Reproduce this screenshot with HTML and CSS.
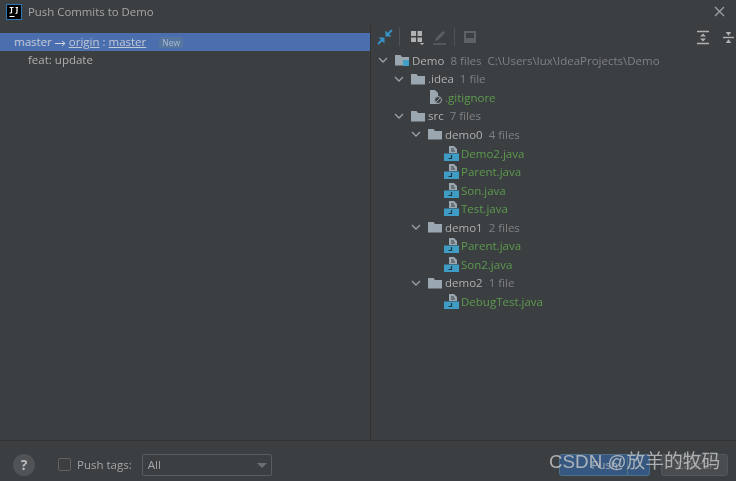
FILE: index.html
```html
<!DOCTYPE html>
<html lang="en">
<head>
<meta charset="utf-8">
<title>Push Commits to Demo</title>
<link rel="stylesheet" href="styles.css">
</head>
<body>
<svg class="defs" width="0" height="0">
  <defs>
    <symbol id="folder" viewBox="0 0 14 12"><path d="M0 1h5.500l1.500 2h7v8.500H0z" fill="#9aa7b0"/></symbol>
    <symbol id="java" viewBox="0 0 15 15">
      <path d="M5 0h5l3 3v4H5z" fill="#9aa7b0"/>
      <path d="M7 3h3M7 5h4" stroke="#3c3f41" stroke-width="1"/>
      <path d="M0 7.500h15V15H0z" fill="#3f9cc4"/>
      <path d="M7.500 9v3.500H4.500" fill="none" stroke="#20343c" stroke-width="1.200"/>
    </symbol>
    <symbol id="chev" viewBox="0 0 10 6"><path d="M1 1l4 4 4-4" fill="none" stroke="#9da0a2" stroke-width="1.300"/></symbol>
  </defs>
</svg>
<div class="dialog">
  <header class="titlebar">
    <svg class="app-icon" width="16" height="16" viewBox="0 0 16 16"><rect width="16" height="16" fill="#2a78b8"/><rect x="1" y="1" width="14" height="14" fill="#000"/><path d="M3.500 3.500h4M5.500 3.500v5.500M3.500 9h2M9.500 3.500h2.500M11 3.500v5c0 .8-.6 1-1.500 1M3.500 12.500h5" stroke="#fff" stroke-width="1.200" fill="none"/></svg>
    <span class="title">Push Commits to Demo</span>
    <svg class="close" width="11" height="11" viewBox="0 0 11 11"><path d="M1 1l9 9M10 1l-9 9" stroke="#9b9ea0" stroke-width="1.400"/></svg>
  </header>
  <main class="panes">
    <section class="commits">
      <div class="branch">master <svg class="arrow" width="11" height="7" viewBox="0 0 11 7"><path d="M0 3.500h10M7 1l3 2.500L7 6" fill="none" stroke="#d0d5de"/></svg> <u>origin</u> : <u>master</u><span class="new">New</span></div>
      <div class="commit">feat: update</div>
    </section>
    <section class="changes">
      <div class="toolbar">
        <svg width="16" height="16" viewBox="0 0 16 16"><path d="M15 1l-4.500 4.500" stroke="#3592c4" stroke-width="2"/><path d="M8.500 1.500l6 6h-6z" fill="#3592c4"/><path d="M1 15l4.500-4.500" stroke="#3592c4" stroke-width="2"/><path d="M7.500 14.500l-6-6h6z" fill="#3592c4"/></svg>
        <span class="tsep first"></span>
        <svg width="16" height="16" viewBox="0 0 16 16"><path d="M1 2h5v5H1zM7.500 2H12v5H7.500zM1 8.500h5V13H1zM7.500 8.500H12V13H7.500z" fill="#afb1b3"/><path d="M9.500 14h5L12 16z" fill="#afb1b3"/></svg>
        <svg width="16" height="16" viewBox="0 0 16 16"><path d="M2 15h13" stroke="#5c5f61" stroke-width="1.600"/><path d="M4 12l1-3 7-7 2 2-7 7z" fill="#5c5f61"/></svg>
        <span class="tsep"></span>
        <svg width="12" height="14" viewBox="0 0 12 14"><path d="M0 1h12v12H0z" fill="#5f6264"/><path d="M2 3h8v5H2z" fill="#3c3f41"/></svg>
        <span class="tspacer"></span>
        <svg width="14" height="15" viewBox="0 0 14 15"><path d="M1 1.500h12M1 13.500h12" stroke="#afb1b3" stroke-width="1.500"/><path d="M7 3.500l3 3H4zM7 11.500l-3-3h6z" fill="#afb1b3"/></svg>
        <svg class="last" width="13" height="15" viewBox="0 0 14 15"><path d="M1 7.500h12" stroke="#afb1b3" stroke-width="1.500"/><path d="M4 1.500h6l-3 4zM4 13.500h6l-3-4z" fill="#afb1b3"/></svg>
      </div>
      <ul class="tree">
        <li class="row d0"><svg class="chevron"><use href="#chev"/></svg>
          <span class="module"><svg class="ficon"><use href="#folder"/></svg><i class="dot"></i></span><span class="name">Demo</span><span class="meta">8 files</span><span class="meta">C:\Users\lux\IdeaProjects\Demo</span></li>
        <li class="row d1"><svg class="chevron"><use href="#chev"/></svg><svg class="ficon"><use href="#folder"/></svg><span class="name">.idea</span><span class="meta">1 file</span></li>
        <li class="row d2"><svg class="gicon" viewBox="0 0 14 14"><path d="M1 0h5l3 3v11H1z" fill="#9aa7b0"/><circle cx="9" cy="10" r="3.500" fill="#3c3f41" stroke="#9aa7b0"/><path d="M7 12l4-4" stroke="#9aa7b0"/></svg><span class="file">.gitignore</span></li>
        <li class="row d1"><svg class="chevron"><use href="#chev"/></svg><svg class="ficon"><use href="#folder"/></svg><span class="name">src</span><span class="meta">7 files</span></li>
        <li class="row d2f"><svg class="chevron"><use href="#chev"/></svg><svg class="ficon"><use href="#folder"/></svg><span class="name">demo0</span><span class="meta">4 files</span></li>
        <li class="row d3"><svg class="jicon"><use href="#java"/></svg><span class="file">Demo2.java</span></li>
        <li class="row d3"><svg class="jicon"><use href="#java"/></svg><span class="file">Parent.java</span></li>
        <li class="row d3"><svg class="jicon"><use href="#java"/></svg><span class="file">Son.java</span></li>
        <li class="row d3"><svg class="jicon"><use href="#java"/></svg><span class="file">Test.java</span></li>
        <li class="row d2f"><svg class="chevron"><use href="#chev"/></svg><svg class="ficon"><use href="#folder"/></svg><span class="name">demo1</span><span class="meta">2 files</span></li>
        <li class="row d3"><svg class="jicon"><use href="#java"/></svg><span class="file">Parent.java</span></li>
        <li class="row d3"><svg class="jicon"><use href="#java"/></svg><span class="file">Son2.java</span></li>
        <li class="row d2f"><svg class="chevron"><use href="#chev"/></svg><svg class="ficon"><use href="#folder"/></svg><span class="name">demo2</span><span class="meta">1 file</span></li>
        <li class="row d3"><svg class="jicon"><use href="#java"/></svg><span class="file">DebugTest.java</span></li>
      </ul>
    </section>
  </main>
  <footer class="footer">
    <span class="help">?</span>
    <span class="check"></span>
    <span class="label">Push tags:</span>
    <span class="select">All<i class="caret"></i></span>
    <span class="fspacer"></span>
    <span class="btn primary">Push<i class="split"></i></span>
    <span class="btn">Cancel</span>
  </footer>
  <div class="watermark">CSDN @放羊的牧码</div>
</div>
</body>
</html>
```

FILE: styles.css
```css
* { box-sizing: border-box; }
html, body { margin: 0; padding: 0; }
body { width: 736px; height: 481px; overflow: hidden; background: #3c3f41; font-family: "Open Sans", "Noto Sans", sans-serif; font-size: 11.5px; color: #aeb0b2; }
.defs { position: absolute; }
.dialog { position: relative; width: 736px; height: 481px; display: flex; flex-direction: column; filter: blur(0.4px); }
.titlebar { height: 25px; flex: none; display: flex; align-items: center; padding: 0 11px 2px 6px; }
.app-icon { margin-right: 6px; }
.title { flex: 1; font-size: 11.4px; color: #a4a6a8; }
.panes { flex: 1; display: flex; min-height: 0; }
.commits { width: 371px; flex: none; padding-top: 8px; border-right: 1px solid #323232; }
.branch { height: 18px; background: #4b6eaf; padding-left: 14px; line-height: 18px; color: #c2c9d6; }
.arrow { vertical-align: -0.5px; }
.new { margin-left: 13px; padding: 0 3px; font-size: 8.5px; background: #56769f; color: #a9bbd2; border-radius: 2px; }
.commit { height: 18px; line-height: 18px; padding-left: 28px; }
.changes { flex: 1; display: flex; flex-direction: column; }
.toolbar { height: 24px; flex: none; display: flex; align-items: center; gap: 5px; padding: 0 1px 0 6px; }
.tsep { width: 1px; height: 18px; background: #515456; margin: 0 4px 0 2px; }
.tsep.first { margin: 0 5px 0 1px; }
.tspacer { flex: 1; }
.toolbar .last { margin-left: 7px; }
.tree { list-style: none; margin: 2px 0 0; padding: 0; }
.row { height: 18.55px; display: flex; align-items: center; white-space: nowrap; }
.d0 { padding-left: 7px; }
.d1 { padding-left: 23px; }
.d2 { padding-left: 58px; }
.d2f { padding-left: 40px; }
.d3 { padding-left: 73px; }
.chevron { width: 10px; height: 6px; flex: none; margin-right: 7px; }
.ficon { width: 14px; height: 12px; flex: none; margin-right: 3px; }
.module { position: relative; display: flex; }
.dot { position: absolute; left: 8px; top: 6px; width: 6px; height: 6px; background: #40a0c8; }
.gicon { width: 14px; height: 14px; flex: none; margin-right: 2px; }
.jicon { width: 15px; height: 15px; flex: none; margin-right: 2px; }
.name { margin-right: 6px; }
.meta { color: #7f8285; margin-right: 6px; }
.file { color: #5c9a4e; }
.footer { height: 41px; flex: none; border-top: 1px solid #323232; display: flex; align-items: center; padding: 7px 8px 0 13px; }
.help { width: 22px; height: 22px; border-radius: 50%; background: #515456; color: #bbbdbf; font-weight: 700; font-size: 14px; display: flex; align-items: center; justify-content: center; margin-right: 23px; }
.check { width: 13px; height: 13px; border: 1px solid #616365; border-radius: 2px; margin-right: 6px; }
.label { margin-right: 10px; color: #a4a6a8; }
.select { position: relative; width: 130px; height: 22px; border: 1px solid #5a5d5f; border-radius: 2px; display: flex; align-items: center; padding-left: 5px; color: #a4a6a8; }
.caret { position: absolute; right: 4px; top: 8px; border: 5px solid transparent; border-top: 5px solid #6d7072; border-bottom: 0; }
.fspacer { flex: 1; }
.btn { width: 67px; height: 22px; border-radius: 3px; background: #4a4d4f; border: 1px solid #55585a; color: #77797b; display: flex; align-items: center; justify-content: center; }
.btn.primary { position: relative; width: 91px; margin-right: 11px; background: #365880; border-color: #4c708c; color: #a0a8b2; }
.split { position: absolute; right: 21px; top: 0; bottom: 0; width: 1px; background: #4c708c; }
.watermark { position: absolute; left: 549px; top: 450px; font-family: "Liberation Sans", "Noto Sans CJK SC", sans-serif; font-size: 18.8px; line-height: 24px; color: #c0c2c3; opacity: .85; white-space: nowrap; }
```
